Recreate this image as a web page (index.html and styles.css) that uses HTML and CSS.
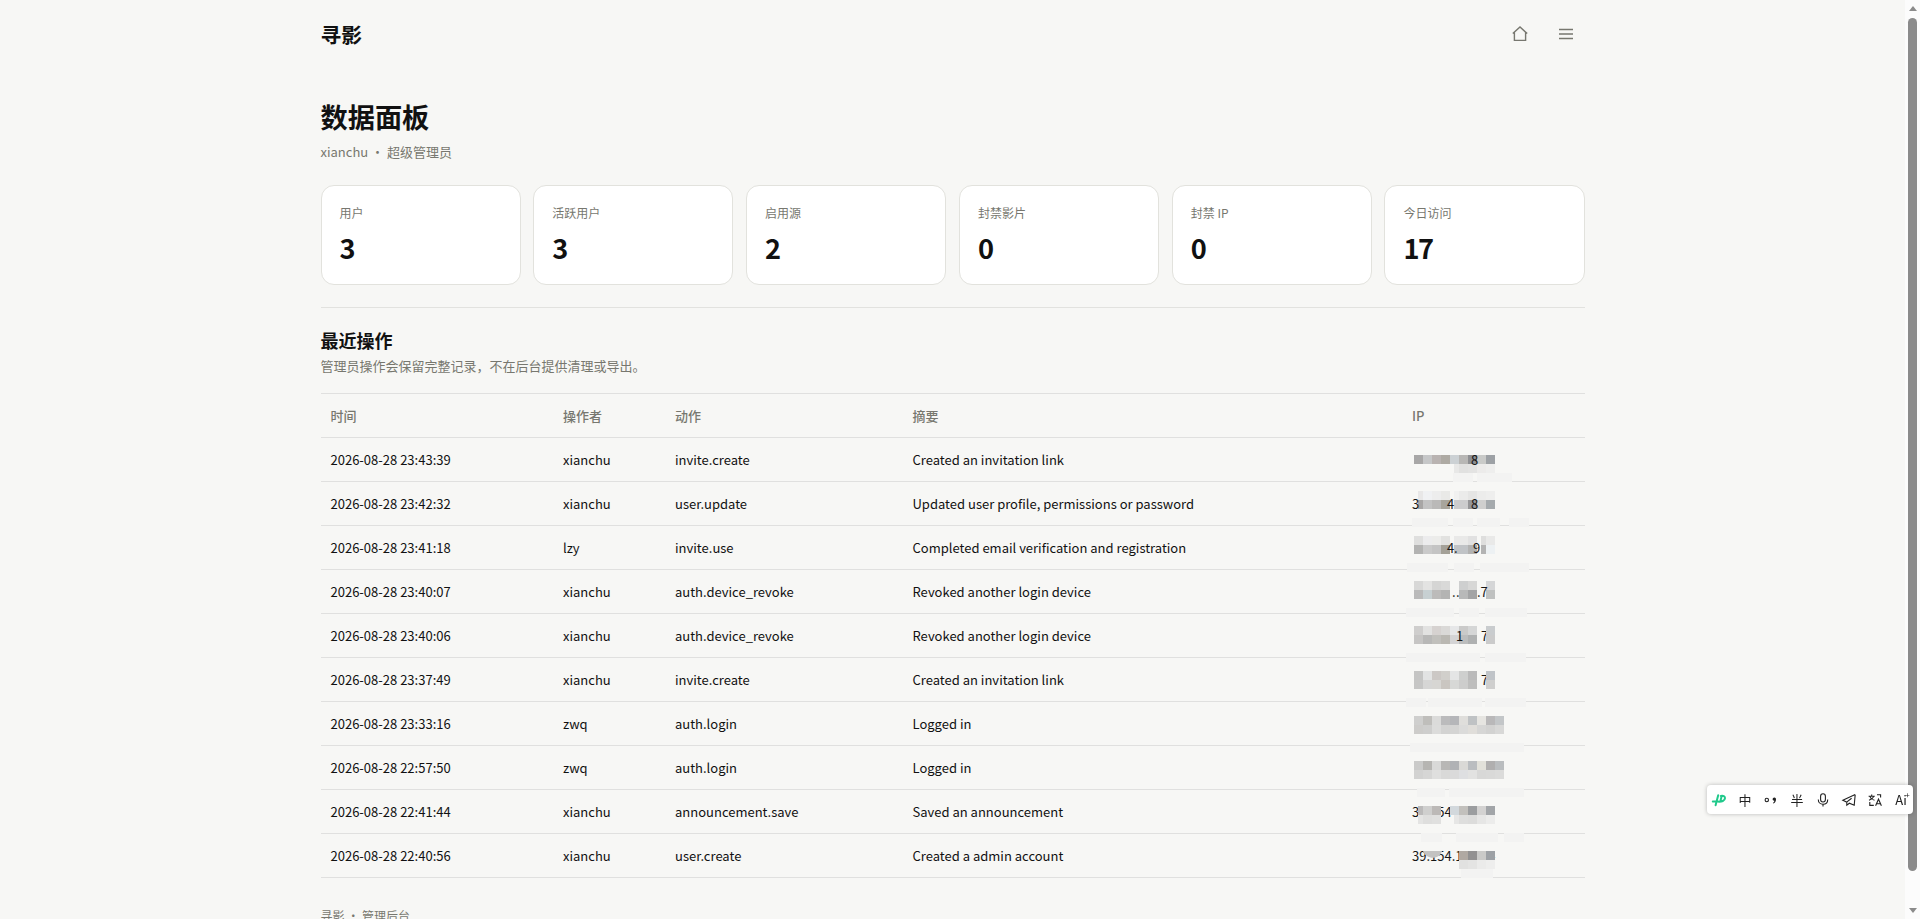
FILE: index.html
```html
<!DOCTYPE html>
<html lang="zh-CN">
<head>
  <meta charset="UTF-8">
  <title>数据面板 · 寻影</title>
  <meta name="viewport" content="width=device-width, initial-scale=1.0">
  <link rel="stylesheet" href="styles.css">
</head>
<body>
  <div class="page">
    <header class="topbar">
      <a class="brand">寻影</a>
      <nav class="nav">
        <a class="icon-btn" aria-label="首页">
          <svg width="18" height="18" viewBox="0 0 18 18"><path d="M1.8 8.6 9 2l7.2 6.6M3.4 7.4v8h11.2v-8"/></svg>
        </a>
        <a class="icon-btn" aria-label="菜单">
          <svg width="18" height="18" viewBox="0 0 18 18"><path d="M2 4.5h14M2 9h14M2 13.5h14"/></svg>
        </a>
      </nav>
    </header>

    <main>
      <h1>数据面板</h1>
      <p class="sub">xianchu ・ 超级管理员</p>

      <div class="stats">
        <div class="stat"><span>用户</span><strong>3</strong></div>
        <div class="stat"><span>活跃用户</span><strong>3</strong></div>
        <div class="stat"><span>启用源</span><strong>2</strong></div>
        <div class="stat"><span>封禁影片</span><strong>0</strong></div>
        <div class="stat"><span>封禁 IP</span><strong>0</strong></div>
        <div class="stat"><span>今日访问</span><strong>17</strong></div>
      </div>

      <section class="logs">
        <h2>最近操作</h2>
        <p class="sub">管理员操作会保留完整记录，不在后台提供清理或导出。</p>
        <div class="table-wrap">
          <table>
            <colgroup>
              <col class="c-time"><col class="c-user"><col class="c-action"><col class="c-note"><col>
            </colgroup>
            <thead>
              <tr><th>时间</th><th>操作者</th><th>动作</th><th>摘要</th><th>IP</th></tr>
            </thead>
            <tbody>
              <tr><td>2026-08-28 23:43:39</td><td>xianchu</td><td>invite.create</td><td>Created an invitation link</td><td></td></tr>
              <tr><td>2026-08-28 23:42:32</td><td>xianchu</td><td>user.update</td><td>Updated user profile, permissions or password</td><td></td></tr>
              <tr><td>2026-08-28 23:41:18</td><td>lzy</td><td>invite.use</td><td>Completed email verification and registration</td><td></td></tr>
              <tr><td>2026-08-28 23:40:07</td><td>xianchu</td><td>auth.device_revoke</td><td>Revoked another login device</td><td></td></tr>
              <tr><td>2026-08-28 23:40:06</td><td>xianchu</td><td>auth.device_revoke</td><td>Revoked another login device</td><td></td></tr>
              <tr><td>2026-08-28 23:37:49</td><td>xianchu</td><td>invite.create</td><td>Created an invitation link</td><td></td></tr>
              <tr><td>2026-08-28 23:33:16</td><td>zwq</td><td>auth.login</td><td>Logged in</td><td></td></tr>
              <tr><td>2026-08-28 22:57:50</td><td>zwq</td><td>auth.login</td><td>Logged in</td><td></td></tr>
              <tr><td>2026-08-28 22:41:44</td><td>xianchu</td><td>announcement.save</td><td>Saved an announcement</td><td></td></tr>
              <tr><td>2026-08-28 22:40:56</td><td>xianchu</td><td>user.create</td><td>Created a admin account</td><td></td></tr>
            </tbody>
          </table>
          <svg class="mask" id="mask" width="183" height="485"></svg>
        </div>
      </section>
    </main>

    <footer>寻影 ・ 管理后台</footer>
  </div>

  <div class="scrollbar">
    <i class="arrow up"></i>
    <i class="thumb"></i>
    <i class="arrow down"></i>
  </div>

  <div class="ime">
    <svg class="ime-logo" viewBox="0 0 16 16"><path d="M1.800 9.400h4.600M7.200 3.200 4.600 13.200M6.800 9.600c4 .4 7-.8 7.200-3.400.1-2-1.800-2.800-4.200-2.200M10.400 5.200 9.400 9"/></svg>
    <span>中</span>
    <svg viewBox="0 0 16 16"><circle cx="3.800" cy="8" r="1.700"/><path class="fill" d="M9.600 7a1.700 1.700 0 1 1 3.400.2c0 2.200-1 3.600-2.700 4.300l-.4-.7c.9-.5 1.400-1.200 1.400-2.100-.9.1-1.700-.7-1.700-1.700z"/></svg>
    <span>半</span>
    <svg viewBox="0 0 16 16"><rect x="5.600" y="1.800" width="4.800" height="8.200" rx="2.400"/><path d="M3.300 7.400c0 3 2 4.900 4.700 4.900s4.700-1.900 4.700-4.900M8 12.300v2.300"/></svg>
    <svg viewBox="0 0 16 16"><path d="M14.200 2.600 1.800 8.200l3.800 1.900 5-3.900M14.200 2.600 13.200 13.200 8.400 11.200l-2.600 2V10"/></svg>
    <svg viewBox="0 0 16 16"><path d="M1.600 4.200h6.200M4.700 2.400v1.800M6.800 4.400C6 6.400 4.200 7.700 2 8.300M2.700 4.400c.8 2 2.400 3.300 4.800 3.900M10 2.800h3.600v2.800M2.800 10v3.400h4M8.600 13.800l2.900-6.600 2.900 6.600M9.600 11.800h3.800"/></svg>
    <span class="ai">Ai<sup>+</sup></span>
  </div>

  <script>
    // each row: top, first line of 9px blocks, second line of blocks
    // "-" leaves a gap, ">" starts the block a few pixels later
    const CELL = 9;
    const LEFT = 12;
    const blocks = [
      [62, "a8a7a7 c6c7c8 b9b3b1 aeaaa3 ccd1d4 b8b7b5 8e8f92 c9cac8 9da1a5", "- - - - >e8e8e7 e1e1e0 e3e3e2 ecebea eeeeed"],
      [98, ">e8e7e7 f0f1f3 ededed e9e9e7 >f1f1f0 ebebea e5e5e4 ececeb eeeeed", ">a8a6a5 c3c3c3 bab9b8 a8a59c >cccccd cccccd 969698 cfcfce a5aaad"],
      [143, "dfdfde ececed ececea e2e2e0 >e9e9e8 e9e9e8 e1e1e1 >dededd e9e9e8", "b3b3b2 cacaca c4c4c4 a4a198 >c0c3c6 c0c3c6 b2b2b1 >b3b3b3 edf1f3"],
      [188, "d8d8d7 e3e3e2 d5d5d4 d9d9d8 - cecfcf d7d7d6 - d5d6d7", "bababa c7d0d2 bcbbba b4b4b3 - b8b9b9 a3a4a5 - bfc1c0"],
      [233, "cfcecd e2e2e1 d6d2d0 dad9d7 e6e7e8 cacac9 d5d6d6 - c9ccce", "c6c5c4 b8b8b7 c1c0bc bab8b2 d4d4d5 bcbdbd afb1b1 - cbcbcb"],
      [278, "c5c5c4 e2e3e3 ccc8c5 d1cfcb e4e5e5 cecfce bababa - c0c4c8", "c6c6c5 d6d6d5 d7d6d3 cac6c1 d7d8d6 cdcdcc bebebd - cfcfce"],
      [323, "cfcfce bfbebb dbdbda bbbbbc b5b6b9 dfdedb bfc2c4 e6e5e1 b9b8b9 c3c6c8", "cdccca cececd dcdcdb d3d3d2 d4d4d3 dbdbda e0deda d6d6d5 d2d2d1 d8d8d7"],
      [368, "cacac9 b6b5b2 d9d9d8 b8b7b5 b0b2b5 dad9d6 babdc0 e2e1da b0afaf babdbf", "d2d2d1 d6d6d5 dfdfde d9d9d8 dadada dedfe1 e2e2e1 d8d8d7 d9d9d8 dbdbda"],
      [413, ">bbbaba cfcfce bcb9b7 - d2d8dc c2c0bc 9b9d9f d3d2d1 a2a5a8", ">e4e4e3 dededd e0e0df - >e6e6e5 dededd dcdcdb e6e6e5 ececeb"],
      [458, "- - - - - b0a9a2 929191 cacac8 9da1a5", "- - - - - e1e1e0 e4e4e3 ebebea eeeeed"]
    ];
    // digits that still show: x, baseline, text
    const digits = [
      [69, 72, "8"],
      [10, 116, "3"], [45, 116, "4"], [69, 116, "8"],
      [45, 160, "4"], [52, 160, "."], [71, 160, "9"],
      [50, 204, "."], [54, 204, "."], [75, 204, ".7"],
      [54, 248, "1"], [79, 248, "7"],
      [79, 292, "7"],
      [10, 424, "39.154"],
      [10, 468, "39.154.1"], [86, 468, "4"]
    ];
    // faint patches covering the row lines: x, y, width
    const smears = [
      [51, 80, 20], [75, 80, 35],
      [10, 125, 36], [51, 125, 20], [75, 125, 23], [107, 125, 20],
      [5, 170, 41], [52, 170, 20], [78, 170, 49],
      [4, 215, 48], [57, 215, 20], [83, 215, 42],
      [4, 260, 74], [83, 260, 41],
      [4, 305, 20], [26, 305, 54], [83, 305, 41],
      [8, 350, 114], [15, 395, 28], [47, 395, 75],
      [19, 440, 21], [54, 440, 42], [102, 440, 20],
      [59, 476, 32]
    ];

    const rect = (x, y, w, fill) =>
      `<rect x="${x}" y="${y}" width="${w}" height="${CELL}" fill="#${fill}"/>`;
    const text = d => `<text x="${d[0]}" y="${d[1]}">${d[2]}</text>`;

    let out = smears.map(s => rect(s[0], s[1], s[2], "f3f3f2")).join("");
    // digits go under the blocks, except the ones drawn again below
    out += digits.filter(d => d[1] > 400 || d[0] > 75).map(text).join("");
    blocks.forEach(([top, ...lines]) => {
      lines.forEach((line, j) => {
        line.split(" ").forEach((color, i) => {
          if (color === "-") return;
          const cut = color[0] === ">" ? 4 : 0;
          out += rect(LEFT + i * CELL + cut, top + j * CELL, CELL - cut, color.replace(">", ""));
        });
      });
    });
    out += `<path d="M21 458h19c-2 9-16 9-19 0z" fill="#c3c2c1"/>`;
    out += digits.filter(d => d[1] < 400 && d[0] <= 75).map(text).join("");
    document.getElementById("mask").innerHTML = out;
  </script>
</body>
</html>
```
FILE: styles.css
```css
* {
  box-sizing: border-box;
}
html, body {
  height: 100%;
}
body {
  margin: 0;
  padding-right: 15px;
  overflow: hidden;
  background: #f7f7f5;
  color: #111;
  font-family: "Noto Sans CJK SC", sans-serif;
  font-size: 13px;
  line-height: 1.5;
}
.page {
  width: 1264px;
  margin: 0 auto;
}
.topbar {
  display: flex;
  align-items: center;
  justify-content: space-between;
  height: 68px;
}
.brand {
  padding-top: 2px;
  font-size: 20.8px;
  font-weight: 700;
}
.nav {
  display: flex;
  gap: 8px;
}
.icon-btn {
  display: grid;
  place-items: center;
  width: 38px;
  height: 38px;
}
.icon-btn svg {
  fill: none;
  stroke: #77776f;
  stroke-width: 1.4;
}
h1, h2, p {
  margin: 0;
}
h1 {
  margin-top: 28px;
  font-size: 27.2px;
  line-height: 40px;
}
.sub {
  color: #77776f;
  line-height: 20px;
}
h1 + .sub {
  margin-top: 6px;
}
.stats {
  display: grid;
  grid-template-columns: repeat(6, 1fr);
  gap: 12.8px;
  margin-top: 23px;
}
.stat {
  height: 100px;
  padding: 18px;
  background: #fff;
  border: 1px solid #e2e2dd;
  border-radius: 13px;
}
.stat span {
  display: block;
  font-size: 12px;
  line-height: 18px;
  color: #77776f;
}
.stat strong {
  display: block;
  margin-top: 5px;
  font-size: 27.2px;
  line-height: 40px;
  letter-spacing: -0.06em;
}
.logs {
  margin-top: 22px;
  padding-top: 19px;
  border-top: 1px solid #e2e2df;
}
h2 {
  font-size: 18px;
  line-height: 27px;
}
h2 + .sub {
  margin-top: 2px;
}
.table-wrap {
  position: relative;
  margin-top: 17px;
}
table {
  width: 100%;
  table-layout: fixed;
  border-collapse: separate;
  border-spacing: 0;
  border-top: 1px solid #e0e0df;
}
.c-time { width: 232.5px; }
.c-user { width: 112px; }
.c-action { width: 237.5px; }
.c-note { width: 499.5px; }
th, td {
  height: 44px;
  padding: 0 10px;
  border-bottom: 1px solid #e0e0df;
  text-align: left;
  white-space: nowrap;
}
th {
  font-weight: 500;
  color: #77776f;
}
.mask {
  position: absolute;
  top: 0;
  right: 0;
  font-size: 13px;
  fill: #171717;
}
footer {
  margin-top: 29px;
  font-size: 12px;
  line-height: 18px;
  color: #77776f;
}

/* window chrome */
.scrollbar {
  position: fixed;
  top: 0;
  right: 0;
  bottom: 0;
  display: flex;
  flex-direction: column;
  align-items: center;
  width: 15px;
  padding: 6px 0;
  background: #fcfcfc;
}
.thumb {
  width: 9px;
  height: 853px;
  margin-top: 7px;
  border-radius: 5px;
  background: #8b8b8b;
}
.arrow {
  border: 4.5px solid transparent;
}
.arrow.up {
  border-top: 0;
  border-bottom: 5px solid #8b8b8b;
}
.arrow.down {
  margin-top: auto;
  border-bottom: 0;
  border-top: 5px solid #8b8b8b;
}
.ime {
  position: fixed;
  top: 785px;
  right: 7px;
  display: grid;
  grid-template-columns: repeat(8, 26px);
  align-items: center;
  justify-content: center;
  justify-items: center;
  width: 206px;
  height: 29px;
  border-radius: 4px;
  background: #fff;
  box-shadow: 0 0 4px rgba(0,0,0,0.25);
  font-size: 13px;
  color: #222;
}
.ime svg {
  width: 16px;
  height: 16px;
  fill: none;
  stroke: #222;
  stroke-width: 1.1;
}
.ime svg .fill {
  fill: #222;
  stroke: none;
}
.ime .ime-logo {
  stroke: #20c98b;
  stroke-width: 2;
  stroke-linecap: round;
}
.ime .ai {
  position: relative;
}
.ime sup {
  position: absolute;
  top: 0;
  right: -3px;
  font-size: 8px;
  line-height: 10px;
}
```
